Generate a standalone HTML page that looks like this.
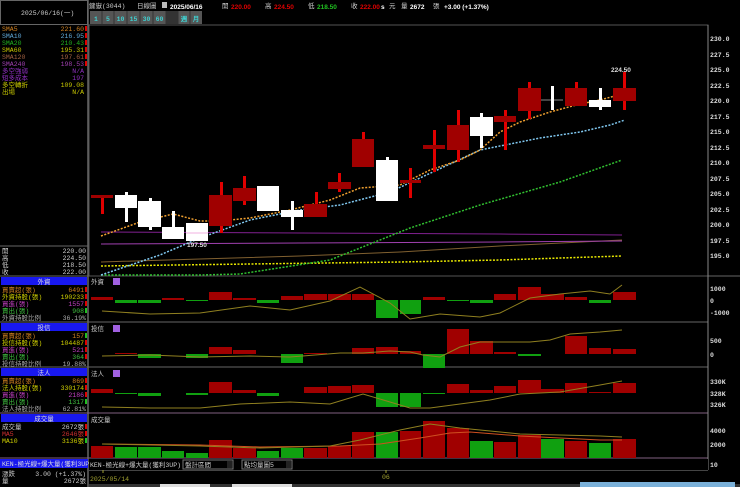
<!DOCTYPE html>
<html><head><meta charset="utf-8"><style>
html,body{margin:0;padding:0;background:#000;width:740px;height:487px;overflow:hidden}
svg{display:block}
text{font-family:"Liberation Mono","WenQuanYi Zen Hei",monospace;font-size:6.5px}
.b{font-family:"Liberation Sans","WenQuanYi Zen Hei",sans-serif;font-weight:bold}
.ax{font-family:"Liberation Sans",sans-serif;font-weight:bold;font-size:8px;fill:#ddd}
</style></head><body>
<svg width="740" height="487" viewBox="0 0 740 487" xmlns="http://www.w3.org/2000/svg">
<rect width="740" height="487" fill="#000"/>
<rect x="0.5" y="0.5" width="87" height="24" fill="#000" stroke="#666"/>
<text x="21" y="15" fill="#ccc" font-size="7">2025/06/16(一)</text>
<line x1="88" y1="0" x2="88" y2="487" stroke="#666" stroke-width="1.5"/>
<g>
<text x="2" y="31" fill="#d08020">SMA5</text><text x="84" y="31" fill="#d08020" text-anchor="end">221.60</text>
<text x="2" y="38" fill="#60a8d8">SMA10</text><text x="84" y="38" fill="#60a8d8" text-anchor="end">216.95</text>
<text x="2" y="45" fill="#20b020">SMA20</text><text x="84" y="45" fill="#20b020" text-anchor="end">210.43</text>
<text x="2" y="52" fill="#c8c800">SMA60</text><text x="84" y="52" fill="#c8c800" text-anchor="end">195.31</text>
<text x="2" y="59" fill="#a06040">SMA120</text><text x="84" y="59" fill="#a06040" text-anchor="end">197.61</text>
<text x="2" y="66" fill="#a040b0">SMA240</text><text x="84" y="66" fill="#a040b0" text-anchor="end">198.53</text>
<text x="2" y="73" fill="#9030c0">多空強弱</text><text x="84" y="73" fill="#9030c0" text-anchor="end">N/A</text>
<text x="2" y="80" fill="#9030c0">短多成本</text><text x="84" y="80" fill="#9030c0" text-anchor="end">197</text>
<text x="2" y="87" fill="#c8c800">多空轉折</text><text x="84" y="87" fill="#c8c800" text-anchor="end">109.08</text>
<text x="2" y="94" fill="#c8c800">出場</text><text x="84" y="94" fill="#c8c800" text-anchor="end">N/A</text>
<g fill="#e00000"><rect x="85" y="26" width="2" height="5"/><rect x="85" y="33" width="2" height="5"/><rect x="85" y="40" width="2" height="5"/><rect x="85" y="47" width="2" height="5"/><rect x="85" y="54" width="2" height="5"/><rect x="85" y="61" width="2" height="5"/></g>
</g>
<line x1="0" y1="246" x2="88" y2="246" stroke="#666"/>
<text x="2" y="253" fill="#ccc">開</text><text x="86" y="253" fill="#ccc" text-anchor="end">220.00</text>
<text x="2" y="260" fill="#ccc">高</text><text x="86" y="260" fill="#ccc" text-anchor="end">224.50</text>
<text x="2" y="267" fill="#ccc">低</text><text x="86" y="267" fill="#ccc" text-anchor="end">218.50</text>
<text x="2" y="274" fill="#ccc">收</text><text x="86" y="274" fill="#ccc" text-anchor="end">222.00</text>
<rect x="1" y="277" width="86" height="8" fill="#1818f0"/><text x="44" y="284" fill="#ddd" text-anchor="middle">外資</text>
<text x="2" y="292" fill="#d08020">買賣超(張)</text><text x="84" y="292" fill="#d08020" text-anchor="end">6491</text>
<text x="2" y="299" fill="#d0d000">外資持股(張)</text><text x="84" y="299" fill="#d0d000" text-anchor="end">190233</text>
<text x="2" y="306" fill="#c040c0">買進(張)</text><text x="84" y="306" fill="#c040c0" text-anchor="end">1557</text>
<text x="2" y="313" fill="#40c040">賣出(張)</text><text x="84" y="313" fill="#40c040" text-anchor="end">908</text>
<text x="2" y="320" fill="#aaa">外資持股比例</text><text x="86" y="320" fill="#aaa" text-anchor="end">36.19%</text>
<rect x="1" y="323" width="86" height="8" fill="#1818f0"/><text x="44" y="330" fill="#ddd" text-anchor="middle">投信</text>
<text x="2" y="338" fill="#d08020">買賣超(張)</text><text x="84" y="338" fill="#d08020" text-anchor="end">157</text>
<text x="2" y="345" fill="#d0d000">投信持股(張)</text><text x="84" y="345" fill="#d0d000" text-anchor="end">104487</text>
<text x="2" y="352" fill="#c040c0">買進(張)</text><text x="84" y="352" fill="#c040c0" text-anchor="end">521</text>
<text x="2" y="359" fill="#40c040">賣出(張)</text><text x="84" y="359" fill="#40c040" text-anchor="end">364</text>
<text x="2" y="366" fill="#aaa">投信持股比例</text><text x="86" y="366" fill="#aaa" text-anchor="end">19.88%</text>
<rect x="1" y="368" width="86" height="8" fill="#1818f0"/><text x="44" y="375" fill="#ddd" text-anchor="middle">法人</text>
<text x="2" y="383" fill="#d08020">買賣超(張)</text><text x="84" y="383" fill="#d08020" text-anchor="end">869</text>
<text x="2" y="390" fill="#d0d000">法人持股(張)</text><text x="84" y="390" fill="#d0d000" text-anchor="end">330174</text>
<text x="2" y="397" fill="#c040c0">買進(張)</text><text x="84" y="397" fill="#c040c0" text-anchor="end">2186</text>
<text x="2" y="404" fill="#40c040">賣出(張)</text><text x="84" y="404" fill="#40c040" text-anchor="end">1317</text>
<text x="2" y="411" fill="#aaa">法人持股比例</text><text x="86" y="411" fill="#aaa" text-anchor="end">62.81%</text>
<rect x="1" y="414" width="86" height="8" fill="#1818f0"/><text x="44" y="421" fill="#ddd" text-anchor="middle">成交量</text>
<text x="2" y="429" fill="#ccc">成交量</text><text x="84" y="429" fill="#ccc" text-anchor="end">2672張</text>
<text x="2" y="436" fill="#d03030">MA5</text><text x="84" y="436" fill="#d03030" text-anchor="end">2646張</text>
<text x="2" y="443" fill="#d0d000">MA10</text><text x="84" y="443" fill="#d0d000" text-anchor="end">3136張</text>
<g fill="#e00000"><rect x="85" y="287" width="2" height="5"/><rect x="85" y="294" width="2" height="5"/><rect x="85" y="301" width="2" height="5"/><rect x="85" y="340" width="2" height="5"/><rect x="85" y="347" width="2" height="5"/><rect x="85" y="354" width="2" height="5"/><rect x="85" y="378" width="2" height="5"/><rect x="85" y="385" width="2" height="5"/><rect x="85" y="392" width="2" height="5"/><rect x="85" y="424" width="2" height="5"/><rect x="85" y="431" width="2" height="5"/></g>
<g fill="#20c020"><rect x="85" y="308" width="2" height="5"/><rect x="85" y="333" width="2" height="5"/><rect x="85" y="399" width="2" height="5"/><rect x="85" y="438" width="2" height="5"/></g>
<g stroke="#666"><line x1="0" y1="276" x2="740" y2="276"/><line x1="0" y1="322" x2="708" y2="322"/><line x1="0" y1="367" x2="708" y2="367"/><line x1="0" y1="413" x2="708" y2="413" stroke="#806080"/><line x1="0" y1="458" x2="708" y2="458" stroke="#806080"/></g>
<rect x="0" y="459" width="88" height="9" fill="#1818f0"/>
<text x="2" y="466" fill="#ddd" font-size="6">KEN-極光線+爆大量(獲利3UP)</text>
<text x="2" y="476" fill="#ccc">漲跌</text><text x="86" y="476" fill="#ccc" text-anchor="end">3.00 (+1.37%)</text>
<text x="2" y="483" fill="#ccc">量</text><text x="86" y="483" fill="#ccc" text-anchor="end">2672張</text>

<text x="89" y="8" fill="#ccc">鍵嶽(3044)</text>
<text x="137" y="8" fill="#ccc">日線圖</text>
<rect x="162" y="2" width="5" height="6" fill="#bbb"/>
<text x="170" y="9" fill="#fff" class="b" font-size="9.5">2025/06/16</text>
<text x="222" y="8" fill="#ccc">開</text><text x="231" y="9" fill="#e00000" class="b" font-size="9.5">220.00</text>
<text x="265" y="8" fill="#ccc">高</text><text x="274" y="9" fill="#e00000" class="b" font-size="9.5">224.50</text>
<text x="308" y="8" fill="#ccc">低</text><text x="317" y="9" fill="#20c020" class="b" font-size="9.5">218.50</text>
<text x="351" y="8" fill="#ccc">收</text><text x="360" y="9" fill="#e00000" class="b" font-size="9.5">222.00</text>
<text x="381" y="9" fill="#fff" class="b" font-size="8">s</text><text x="389" y="8" fill="#ccc">元</text>
<text x="401" y="8" fill="#ccc">量</text><text x="410" y="9" fill="#fff" class="b" font-size="9.5">2672</text><text x="433" y="8" fill="#ccc">張</text>
<text x="444" y="9" fill="#fff" class="b" font-size="9.5">+3.00 (+1.37%)</text>
<g>
<rect x="90" y="11" width="112" height="13" fill="#555"/>
<g stroke="#333"><line x1="102" y1="11" x2="102" y2="24"/><line x1="114" y1="11" x2="114" y2="24"/><line x1="127" y1="11" x2="127" y2="24"/><line x1="140" y1="11" x2="140" y2="24"/><line x1="153" y1="11" x2="153" y2="24"/><line x1="166" y1="11" x2="166" y2="24"/><line x1="178" y1="11" x2="178" y2="24"/><line x1="190" y1="11" x2="190" y2="24"/></g>
<rect x="166" y="11" width="12" height="13" fill="#333"/>
<g fill="#40d0d0" class="b" font-size="8"><text x="96" y="21" text-anchor="middle" font-size="8">1</text><text x="108" y="21" text-anchor="middle" font-size="8">5</text><text x="120.5" y="21" text-anchor="middle" font-size="8">10</text><text x="133.5" y="21" text-anchor="middle" font-size="8">15</text><text x="146.5" y="21" text-anchor="middle" font-size="8">30</text><text x="159.5" y="21" text-anchor="middle" font-size="8">60</text><text x="184" y="21" text-anchor="middle" font-size="7">週</text><text x="196" y="21" text-anchor="middle" font-size="7">月</text></g>
</g>
<rect x="89" y="25" width="619" height="251" fill="none" stroke="#555"/>
<line x1="708" y1="25" x2="708" y2="470" stroke="#888"/>
<line x1="89" y1="470" x2="708" y2="470" stroke="#888"/>
<g class="ax">
<text x="710" y="41">230.0</text><text x="710" y="57">227.5</text><text x="710" y="72">225.0</text><text x="710" y="88">222.5</text><text x="710" y="103">220.0</text><text x="710" y="119">217.5</text><text x="710" y="134">215.0</text><text x="710" y="150">212.5</text><text x="710" y="165">210.0</text><text x="710" y="181">207.5</text><text x="710" y="196">205.0</text><text x="710" y="212">202.5</text><text x="710" y="227">200.0</text><text x="710" y="243">197.5</text><text x="710" y="258">195.0</text>
<text x="710" y="291">1000</text><text x="710" y="303">0</text><text x="710" y="315">-1000</text>
<text x="710" y="343">500</text><text x="710" y="357">0</text>
<text x="710" y="384">330K</text><text x="710" y="396">328K</text><text x="710" y="407">326K</text>
<text x="710" y="433">4000</text><text x="710" y="447">2000</text>
<text x="710" y="467">10</text>
</g>
<polyline points="101,262 200,259 300,256 400,252 500,246 622,240" fill="none" stroke="#806030" stroke-width="1"/>
<polyline points="101,244 300,243 500,242 622,241" fill="none" stroke="#a040b0" stroke-width="1"/>
<polyline points="101,232 300,233 500,234 622,235" fill="none" stroke="#802090" stroke-width="1"/>
<polyline points="101,266 250,264 400,262 500,260 622,256" fill="none" stroke="#e8e800" stroke-width="1.5" stroke-dasharray="2,1.5"/>
<polyline points="101,275 200,275 240,274 330,260 410,228 480,205 560,182 622,160" fill="none" stroke="#30c030" stroke-width="1.5" stroke-dasharray="2,1.5"/>
<polyline points="101,275 160,255 200,238 250,220 300,210 340,205 390,192 420,178 480,150 540,138 580,132 610,125 625,120" fill="none" stroke="#80c8f0" stroke-width="1.5" stroke-dasharray="2,1.5"/>
<polyline points="101,236 140,222 173,214 200,221 220,221 250,218 290,210 330,200 360,188 400,185 430,170 460,160 480,150 500,132 520,122 550,112 580,104 600,100 622,94" fill="none" stroke="#f0a030" stroke-width="1.5" stroke-dasharray="2,1.5"/>
<g>
<rect x="101" y="198" width="3" height="16" fill="#e00000"/><rect x="91" y="195" width="22" height="3" fill="#a00000"/>
<rect x="125" y="192" width="3" height="30" fill="#fff"/><rect x="115" y="195" width="22" height="13" fill="#fff"/>
<rect x="149" y="198" width="3" height="32" fill="#fff"/><rect x="138" y="201" width="23" height="26" fill="#fff"/>
<rect x="172" y="211" width="3" height="16" fill="#fff"/><rect x="162" y="227" width="22" height="12" fill="#fff"/>
<rect x="186" y="223" width="22" height="18" fill="#fff"/><line x1="186" y1="233" x2="208" y2="233" stroke="#f0b0e0"/>
<rect x="220" y="182" width="3" height="51" fill="#e00000"/><rect x="209" y="195" width="23" height="31" fill="#a00000"/>
<rect x="243" y="176" width="3" height="29" fill="#e00000"/><rect x="233" y="188" width="23" height="13" fill="#a00000"/>
<rect x="257" y="186" width="22" height="25" fill="#fff"/>
<rect x="291" y="201" width="3" height="29" fill="#fff"/><rect x="281" y="210" width="22" height="7" fill="#fff"/>
<rect x="315" y="192" width="3" height="12" fill="#e00000"/><rect x="304" y="204" width="23" height="13" fill="#a00000"/>
<rect x="338" y="173" width="3" height="19" fill="#e00000"/><rect x="328" y="182" width="23" height="7" fill="#a00000"/>
<rect x="362" y="132" width="3" height="10" fill="#e00000"/><rect x="352" y="139" width="22" height="28" fill="#a00000"/>
<rect x="386" y="157" width="3" height="5" fill="#fff"/><rect x="376" y="160" width="22" height="41" fill="#fff"/>
<rect x="409" y="168" width="3" height="30" fill="#e00000"/><rect x="400" y="180" width="21" height="3" fill="#a00000"/>
<rect x="433" y="130" width="3" height="42" fill="#e00000"/><rect x="423" y="145" width="22" height="4" fill="#a00000"/>
<rect x="457" y="110" width="3" height="52" fill="#e00000"/><rect x="447" y="125" width="22" height="25" fill="#a00000"/>
<rect x="480" y="113" width="3" height="35" fill="#fff"/><rect x="470" y="117" width="23" height="19" fill="#fff"/>
<rect x="504" y="110" width="3" height="40" fill="#e00000"/><rect x="494" y="116" width="22" height="6" fill="#a00000"/>
<rect x="528" y="82" width="3" height="37" fill="#e00000"/><rect x="518" y="88" width="23" height="23" fill="#a00000"/>
<line x1="541" y1="100" x2="563" y2="100" stroke="#888"/><rect x="551" y="86" width="3" height="24" fill="#fff"/>
<rect x="575" y="82" width="3" height="8" fill="#e00000"/><rect x="565" y="88" width="22" height="18" fill="#a00000"/>
<rect x="599" y="88" width="3" height="22" fill="#fff"/><rect x="589" y="100" width="22" height="7" fill="#fff"/>
<rect x="623" y="72" width="3" height="38" fill="#e00000"/><rect x="613" y="88" width="23" height="13" fill="#a00000"/>
</g>
<text x="611" y="72" fill="#ddd" class="b" font-size="8">224.50</text>
<text x="187" y="247" fill="#ddd" class="b" font-size="8">197.50</text>
<text x="91" y="284" fill="#ccc">外資</text><rect x="113" y="278" width="7" height="7" fill="#a060e0"/>
<text x="91" y="331" fill="#ccc">投信</text><rect x="113" y="325" width="7" height="7" fill="#a060e0"/>
<text x="91" y="376" fill="#ccc">法人</text><rect x="113" y="370" width="7" height="7" fill="#a060e0"/>
<text x="91" y="422" fill="#ccc">成交量</text>
<g fill="#a00000"><rect x="91" y="297" width="22" height="3"/><rect x="162" y="298" width="22" height="2"/><rect x="209" y="292" width="23" height="8"/><rect x="233" y="298" width="23" height="2"/><rect x="281" y="296" width="22" height="4"/><rect x="304" y="294" width="23" height="6"/><rect x="328" y="294" width="23" height="6"/><rect x="352" y="294" width="22" height="6"/><rect x="423" y="297" width="22" height="3"/><rect x="494" y="294" width="22" height="6"/><rect x="518" y="287" width="23" height="13"/><rect x="541" y="294" width="23" height="6"/><rect x="565" y="297" width="22" height="3"/><rect x="613" y="292" width="23" height="8"/></g>
<g fill="#10a010"><rect x="115" y="300" width="22" height="3"/><rect x="138" y="300" width="23" height="3"/><rect x="186" y="300" width="22" height="1"/><rect x="257" y="300" width="22" height="3"/><rect x="376" y="300" width="22" height="18"/><rect x="400" y="300" width="21" height="14"/><rect x="447" y="300" width="22" height="1"/><rect x="470" y="300" width="23" height="3"/><rect x="589" y="300" width="22" height="3"/></g>
<polyline points="102,311 150,314 200,313 250,306 290,310 330,301 360,287 390,303 410,319 440,314 480,317 500,313 530,298 560,294 590,291 610,294 622,285" fill="none" stroke="#908020"/>
<g fill="#a00000"><rect x="115" y="353" width="22" height="1"/><rect x="209" y="347" width="23" height="7"/><rect x="233" y="350" width="23" height="4"/><rect x="304" y="353" width="23" height="1"/><rect x="352" y="348" width="22" height="6"/><rect x="376" y="347" width="22" height="7"/><rect x="400" y="351" width="21" height="3"/><rect x="447" y="329" width="22" height="25"/><rect x="470" y="341" width="23" height="13"/><rect x="494" y="352" width="22" height="2"/><rect x="565" y="336" width="22" height="18"/><rect x="589" y="348" width="22" height="6"/><rect x="613" y="349" width="23" height="5"/></g>
<g fill="#10a010"><rect x="138" y="354" width="23" height="4"/><rect x="186" y="354" width="22" height="4"/><rect x="281" y="354" width="22" height="9"/><rect x="423" y="354" width="22" height="14"/><rect x="518" y="354" width="23" height="2"/></g>
<polyline points="102,356 150,355 200,357 250,356 290,357 340,353 363,353 390,351 410,352 423,355 440,357 460,347 480,342 500,342 530,342 550,340 570,334 600,332 622,330" fill="none" stroke="#908020"/>
<g fill="#a00000"><rect x="91" y="389" width="22" height="4"/><rect x="209" y="382" width="23" height="11"/><rect x="233" y="390" width="23" height="3"/><rect x="304" y="387" width="23" height="6"/><rect x="328" y="386" width="23" height="7"/><rect x="352" y="385" width="22" height="8"/><rect x="447" y="384" width="22" height="9"/><rect x="470" y="390" width="23" height="3"/><rect x="494" y="386" width="22" height="7"/><rect x="518" y="380" width="23" height="13"/><rect x="541" y="389" width="23" height="4"/><rect x="565" y="383" width="22" height="10"/><rect x="589" y="392" width="22" height="1"/><rect x="613" y="383" width="23" height="10"/></g>
<g fill="#10a010"><rect x="115" y="393" width="22" height="1"/><rect x="138" y="393" width="23" height="3"/><rect x="186" y="393" width="22" height="2"/><rect x="257" y="393" width="22" height="3"/><rect x="376" y="393" width="22" height="14"/><rect x="400" y="393" width="21" height="14"/><rect x="423" y="393" width="22" height="1"/></g>
<polyline points="102,407 150,408 200,408 240,404 290,402 330,404 363,394 390,402 410,408 430,408 460,404 490,400 520,394 560,392 600,385 622,381" fill="none" stroke="#908020"/>
<g fill="#a00000"><rect x="91" y="446" width="22" height="12"/><rect x="209" y="440" width="23" height="18"/><rect x="233" y="448" width="23" height="10"/><rect x="304" y="448" width="23" height="10"/><rect x="328" y="446" width="23" height="12"/><rect x="352" y="432" width="22" height="26"/><rect x="400" y="431" width="21" height="27"/><rect x="423" y="421" width="22" height="37"/><rect x="447" y="428" width="22" height="30"/><rect x="494" y="442" width="22" height="16"/><rect x="518" y="435" width="23" height="23"/><rect x="565" y="441" width="22" height="17"/><rect x="613" y="439" width="23" height="19"/></g>
<g fill="#10a010"><rect x="115" y="447" width="22" height="11"/><rect x="138" y="447" width="23" height="11"/><rect x="162" y="451" width="22" height="7"/><rect x="186" y="453" width="22" height="5"/><rect x="257" y="451" width="22" height="7"/><rect x="281" y="448" width="22" height="10"/><rect x="376" y="432" width="22" height="26"/><rect x="470" y="441" width="23" height="17"/><rect x="541" y="439" width="23" height="19"/><rect x="589" y="443" width="22" height="15"/></g>
<polyline points="102,444 200,445 260,447 340,446 380,444 420,438 450,433 470,432 520,436 560,438 600,440 622,440" fill="none" stroke="#d05020"/>
<polyline points="102,444 200,446 260,448 330,446 360,440 400,430 430,424 460,428 480,430 520,434 560,435 600,436 622,437" fill="none" stroke="#908020"/>
<rect x="89" y="459" width="619" height="11" fill="#000"/>
<text x="90" y="467" fill="#ccc" font-size="6">KEN-極光線+爆大量(獲利3UP)</text>
<rect x="183" y="460" width="50" height="9" fill="#000" stroke="#777"/><text x="185" y="467" fill="#ccc" font-size="6.3">盤計區間</text><rect x="227" y="461" width="5" height="7" fill="#222"/>
<rect x="242" y="460" width="50" height="9" fill="#000" stroke="#777"/><text x="244" y="467" fill="#ccc" font-size="6.3">點均量圖5</text><rect x="286" y="461" width="5" height="7" fill="#222"/>
<line x1="103" y1="470" x2="103" y2="473" stroke="#a0a030"/>
<text x="90" y="481" fill="#a0a030" font-size="8">2025/05/14</text>
<line x1="386" y1="470" x2="386" y2="473" stroke="#a0a030"/>
<text x="382" y="479" fill="#a0a030" font-size="7">06</text>
<rect x="89" y="484" width="651" height="3" fill="#333"/>
<rect x="160" y="484" width="50" height="3" fill="#ddd"/><rect x="232" y="484" width="60" height="3" fill="#ddd"/>
<rect x="580" y="482" width="155" height="5" fill="#7ab0d8"/>
</svg>
</body></html>
